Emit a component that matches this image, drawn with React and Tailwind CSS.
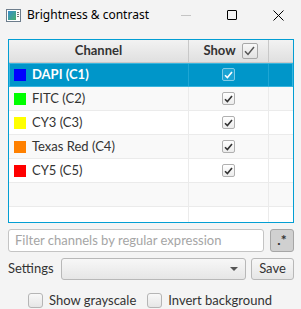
import React from "react"

const channels = [
  { name: "DAPI (C1)", color: "bg-[#0000ff]" },
  { name: "FITC (C2)", color: "bg-[#00ff00]" },
  { name: "CY3 (C3)", color: "bg-[#ffff00]" },
  { name: "Texas Red (C4)", color: "bg-[#ff8000]" },
  { name: "CY5 (C5)", color: "bg-[#ff0000]" },
]

const Check = ({ light }) => (
  <svg width="9" height="8" viewBox="0 0 9 8">
    <path d="M1 4.2 L3.4 6.6 L8 1" fill="none" stroke={light ? "#ffffff" : "#333333"} strokeWidth="1.6" />
  </svg>
)

const CellBox = ({ selected }) => (
  <div
    className={
      selected
        ? "w-[13px] h-[13px] rounded-[2px] border border-[#7fcbe6] bg-[#1aa3d3] flex items-center justify-center"
        : "w-[13px] h-[13px] rounded-[2px] border border-[#b0b0b0] bg-gradient-to-b from-white to-[#ececec] flex items-center justify-center"
    }
  >
    <Check light={selected} />
  </div>
)

const EmptyBox = () => (
  <div className="w-[15px] h-[15px] rounded-[3px] border border-[#b5b5b5] bg-gradient-to-b from-[#f8f8f8] to-[#e6e6e6]" />
)

const App = () => {
  const rows = [...channels, null, null]

  return (
    <div className="w-[301px] h-[309px] bg-[#f4f4f4] text-[#333] font-['Lato','Noto_Sans',sans-serif] text-[13px] overflow-hidden">
      {/* Title bar */}
      <div className="h-[30px] bg-[#f3f3f3] flex items-center font-['Noto_Sans',sans-serif] text-[12px] text-black">
        <div className="ml-[6px] w-[15px] h-[13px] border border-[#6d7d8c] bg-white flex p-[1px] gap-[1px]">
          <div className="w-[8px] h-full bg-gradient-to-br from-[#3b8cc9] to-[#4caf6a]" />
          <div className="flex-1 flex flex-col gap-[1px] pt-[1px]">
            <div className="h-[1px] bg-[#777]" />
            <div className="h-[1px] bg-[#777]" />
            <div className="h-[1px] bg-[#777]" />
          </div>
        </div>
        <span className="ml-[6px]">Brightness &amp; contrast</span>
        <div className="ml-auto flex items-center">
          <div className="w-[46px] flex justify-center">
            <div className="w-[10px] h-px bg-[#c4c4c4]" />
          </div>
          <div className="w-[46px] flex justify-center">
            <div className="w-[10px] h-[10px] border border-black rounded-[1px]" />
          </div>
          <div className="w-[46px] flex justify-center">
            <svg width="11" height="11" viewBox="0 0 11 11">
              <path d="M0.5 0.5 L10.5 10.5 M10.5 0.5 L0.5 10.5" stroke="#000" strokeWidth="1" />
            </svg>
          </div>
        </div>
      </div>

      <div className="px-[8px] pr-[7px] pt-[9px]">
        {/* Table */}
        <div className="h-[184px] border border-[#039ed3] bg-white overflow-hidden">
          <div className="h-[23px] flex bg-gradient-to-b from-[#f2f2f2] to-[#e0e0e0] border-b border-[#c8c8c8] font-bold text-[#333]">
            <div className="w-[180px] border-r border-[#c8c8c8] flex items-center justify-center">Channel</div>
            <div className="w-[80px] border-r border-[#c8c8c8] flex items-center justify-center gap-[6px] pl-[4px]">
              <span>Show</span>
              <div className="w-[16px] h-[16px] rounded-[2px] border border-[#a8a8a8] bg-gradient-to-b from-[#f8f8f8] to-[#e2e2e2] flex items-center justify-center">
                <svg width="11" height="10" viewBox="0 0 11 10">
                  <path d="M1 5.2 L4 8.4 L10 1" fill="none" stroke="#555" strokeWidth="1.5" />
                </svg>
              </div>
            </div>
            <div className="flex-1" />
          </div>

          {rows.map((ch, i) => {
            const selected = i === 0
            const bg = selected ? "bg-[#0096c9] text-white font-bold" : i % 2 === 1 ? "bg-[#f9f9f9]" : "bg-white"
            return (
              <div key={i} className={`h-[24px] flex border-b ${selected ? "border-[#0096c9] outline outline-1 -outline-offset-1 outline-[#39b5de]" : "border-[#ebebeb]"} ${bg}`}>
                <div className={`w-[180px] flex items-center pl-[5px] border-r ${selected ? "border-[#1ea6d4]" : "border-[#ebebeb]"}`}>
                  {ch && (
                    <>
                      <div className={`w-[12px] h-[12px] ${ch.color}`} />
                      <span className="ml-[6px]">{ch.name}</span>
                    </>
                  )}
                </div>
                <div className={`w-[80px] flex items-center justify-center border-r ${selected ? "border-[#1ea6d4]" : "border-[#ebebeb]"}`}>
                  {ch && <CellBox selected={selected} />}
                </div>
                <div className="flex-1" />
              </div>
            )
          })}
        </div>

        {/* Filter */}
        <div className="mt-[6px] flex items-center gap-[6px] h-[23px]">
          <div className="flex-1 h-full rounded-[3px] border border-[#c4c4c4] bg-white flex items-center pl-[6px] text-[#a5a5a5]">
            Filter channels by regular expression
          </div>
          <div className="w-[24px] h-full rounded-[3px] border border-[#a6a6a6] bg-[#d0d0d0] flex items-center justify-center text-[#333] text-[14px] font-bold leading-none pb-[2px]">
            .*
          </div>
        </div>

        {/* Settings */}
        <div className="mt-[6px] flex items-center h-[22px]">
          <span className="w-[53px]">Settings</span>
          <div className="w-[185px] h-full rounded-[3px] border border-[#b8b8b8] bg-gradient-to-b from-[#f7f7f7] to-[#e6e6e6] flex items-center justify-end pr-[7px]">
            <svg width="8" height="4" viewBox="0 0 8 4">
              <path d="M0 0 L8 0 L4 4 Z" fill="#555" />
            </svg>
          </div>
          <div className="ml-[5px] flex-1 h-full rounded-[3px] border border-[#b8b8b8] bg-gradient-to-b from-[#f7f7f7] to-[#e6e6e6] flex items-center justify-center">
            Save
          </div>
        </div>

        {/* Options */}
        <div className="mt-[11px] flex items-center pl-[20px]">
          <EmptyBox />
          <span className="ml-[6px]">Show grayscale</span>
          <div className="ml-[11px]">
            <EmptyBox />
          </div>
          <span className="ml-[6px]">Invert background</span>
        </div>
      </div>
    </div>
  )
}

export default App
